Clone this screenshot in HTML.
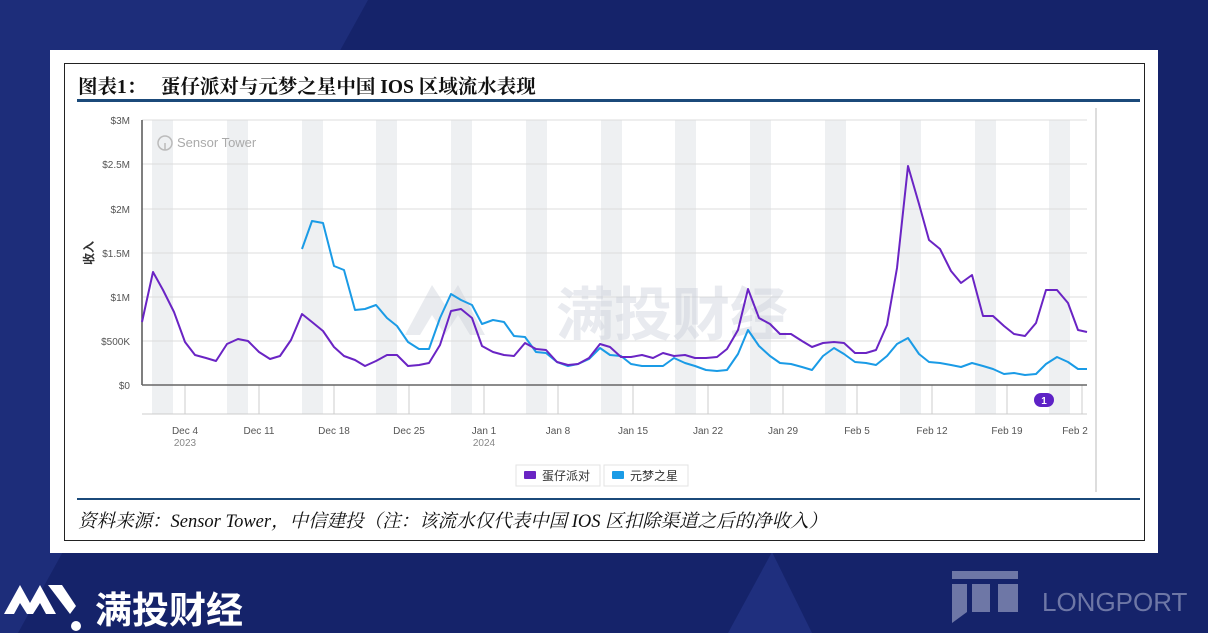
<!DOCTYPE html>
<html><head><meta charset="utf-8"><style>
body{margin:0;width:1208px;height:633px;overflow:hidden;background:#15236a;font-family:"Liberation Sans","Noto Sans CJK SC",sans-serif;position:relative}
.abs{position:absolute}
</style></head><body>
<svg class="abs" style="left:0;top:0" width="1208" height="633">
<polygon points="0,0 368,0 18,633 0,633" fill="#1d2d7a"/>
<polygon points="772,552 728,633 812,633" fill="#1f2f7e"/>
</svg>
<div class="abs" style="left:50px;top:50px;width:1108px;height:503px;background:#fff"></div>
<div class="abs" style="left:64px;top:63px;width:1079px;height:476px;border:1px solid #222;background:#fff"></div>
<div class="abs" style="left:78px;top:71px;font-size:19.5px;font-weight:bold;color:#111;font-family:'Liberation Serif','Noto Serif CJK SC',serif;white-space:nowrap">图表1：&nbsp;&nbsp;&nbsp;蛋仔派对与元梦之星中国 IOS 区域流水表现</div>
<div class="abs" style="left:77px;top:99px;width:1063px;height:3px;background:#1b4a7a"></div>
<div class="abs" style="left:77px;top:498px;width:1063px;height:2px;background:#1b4a7a"></div>
<div class="abs" style="left:78px;top:507px;font-size:18.5px;font-style:italic;color:#111;font-family:'Liberation Serif','Noto Serif CJK SC',serif;white-space:nowrap">资料来源：Sensor Tower，中信建投（注：该流水仅代表中国 IOS 区扣除渠道之后的净收入）</div>
<svg class="abs" style="left:0;top:0" width="1208" height="633" font-family="Liberation Sans, Noto Sans CJK SC, sans-serif">
<g fill="#eef0f2">
<rect x="152" y="120" width="21" height="294"/><rect x="227" y="120" width="21" height="294"/><rect x="302" y="120" width="21" height="294"/><rect x="376" y="120" width="21" height="294"/><rect x="451" y="120" width="21" height="294"/><rect x="526" y="120" width="21" height="294"/><rect x="601" y="120" width="21" height="294"/><rect x="675" y="120" width="21" height="294"/><rect x="750" y="120" width="21" height="294"/><rect x="825" y="120" width="21" height="294"/><rect x="900" y="120" width="21" height="294"/><rect x="975" y="120" width="21" height="294"/><rect x="1049" y="120" width="21" height="294"/>
</g>
<g stroke="#dcdcdc" stroke-width="1">
<line x1="142" y1="120" x2="1087" y2="120"/><line x1="142" y1="164" x2="1087" y2="164"/><line x1="142" y1="209" x2="1087" y2="209"/><line x1="142" y1="253" x2="1087" y2="253"/><line x1="142" y1="297" x2="1087" y2="297"/><line x1="142" y1="341" x2="1087" y2="341"/>
</g>
<line x1="142" y1="120" x2="142" y2="385" stroke="#555" stroke-width="1.5"/>
<line x1="1096" y1="108" x2="1096" y2="492" stroke="#bbb"/>
<line x1="142" y1="414" x2="1087" y2="414" stroke="#ccc"/>
<g stroke="#ccc"><line x1="185" y1="385" x2="185" y2="414"/><line x1="259" y1="385" x2="259" y2="414"/><line x1="334" y1="385" x2="334" y2="414"/><line x1="409" y1="385" x2="409" y2="414"/><line x1="484" y1="385" x2="484" y2="414"/><line x1="558" y1="385" x2="558" y2="414"/><line x1="633" y1="385" x2="633" y2="414"/><line x1="708" y1="385" x2="708" y2="414"/><line x1="783" y1="385" x2="783" y2="414"/><line x1="857" y1="385" x2="857" y2="414"/><line x1="932" y1="385" x2="932" y2="414"/><line x1="1007" y1="385" x2="1007" y2="414"/><line x1="1082" y1="385" x2="1082" y2="414"/></g>
<g font-size="10" fill="#555" text-anchor="end">
<text x="130" y="124">$3M</text><text x="130" y="168">$2.5M</text><text x="130" y="213">$2M</text><text x="130" y="257">$1.5M</text><text x="130" y="301">$1M</text><text x="130" y="345">$500K</text><text x="130" y="389">$0</text>
</g>
<text x="93" y="253" font-size="12" fill="#333" font-weight="bold" transform="rotate(-90 93 253)" text-anchor="middle">收入</text>
<g font-size="10" fill="#555" text-anchor="middle">
<text x="185" y="434">Dec 4</text><text x="185" y="446" fill="#888">2023</text><text x="259" y="434">Dec 11</text><text x="334" y="434">Dec 18</text><text x="409" y="434">Dec 25</text><text x="484" y="434">Jan 1</text><text x="484" y="446" fill="#888">2024</text><text x="558" y="434">Jan 8</text><text x="633" y="434">Jan 15</text><text x="708" y="434">Jan 22</text><text x="783" y="434">Jan 29</text><text x="857" y="434">Feb 5</text><text x="932" y="434">Feb 12</text><text x="1007" y="434">Feb 19</text><text x="1075" y="434">Feb 2</text>
</g>
<g opacity="0.4">
<path d="M405,335 L432,285 L445,305 L458,285 L485,335 L470,335 L458,315 L445,335 L432,315 L420,335Z" fill="#c8ccd8"/>
<text x="556" y="335" font-size="58" font-weight="bold" fill="#c8ccd8">满投财经</text>
</g>
<circle cx="165" cy="143" r="7" fill="none" stroke="#bbb" stroke-width="1.5"/><line x1="165" y1="143" x2="165" y2="150" stroke="#bbb" stroke-width="1.5"/>
<text x="177" y="147" font-size="13" fill="#aaa">Sensor Tower</text>
<line x1="142" y1="385" x2="1087" y2="385" stroke="#666" stroke-width="1.5"/>
<polyline fill="none" stroke="#1a9be6" stroke-width="2" stroke-linejoin="round" points="302,249 312,221 323,223 334,266 344,270 355,310 365,309 376,305 387,318 397,326 408,342 419,349 429,349 440,318 451,294 461,300 472,305 482,324 493,320 504,322 514,336 525,337 536,352 546,353 557,362 568,366 578,364 589,359 600,348 610,355 621,356 631,364 642,366 653,366 663,366 674,358 685,363 695,366 706,370 717,371 727,370 738,354 748,330 759,346 770,356 780,363 791,364 802,367 812,370 823,356 834,348 844,354 855,362 866,363 876,365 887,356 897,344 908,338 919,354 929,362 940,363 951,365 961,367 972,363 983,366 993,369 1004,374 1014,373 1025,375 1036,374 1046,364 1057,357 1068,362 1078,369 1087,369"/>
<polyline fill="none" stroke="#6a24c4" stroke-width="2" stroke-linejoin="round" points="142,322 153,272 163,290 174,312 185,342 195,355 206,358 216,361 227,344 238,339 248,341 259,352 270,359 280,356 291,340 302,314 312,322 323,331 334,347 344,356 355,360 365,366 376,361 387,355 397,355 408,366 419,365 429,363 440,345 451,311 461,309 472,318 482,346 493,352 504,355 514,356 525,343 536,349 546,350 557,362 568,365 578,364 589,358 600,344 610,347 621,357 631,357 642,355 653,358 663,353 674,356 685,355 695,358 706,358 717,357 727,349 738,330 748,289 759,318 770,324 780,334 791,334 802,341 812,347 823,343 834,342 844,343 855,353 866,353 876,350 887,325 897,268 908,166 919,204 929,240 940,249 951,271 961,283 972,275 983,316 993,316 1004,326 1014,334 1025,336 1036,323 1046,290 1057,290 1068,303 1078,330 1087,332"/>
<rect x="1034" y="393" width="20" height="14" rx="7" fill="#5e22c6"/><text x="1044" y="404" font-size="10" fill="#fff" font-weight="bold" text-anchor="middle">1</text>
<rect x="516" y="465" width="84" height="21" fill="#fff" stroke="#e3e3e3"/><rect x="524" y="471" width="12" height="8" rx="1" fill="#6a24c4"/><text x="542" y="480" font-size="12" fill="#333">蛋仔派对</text>
<rect x="604" y="465" width="84" height="21" fill="#fff" stroke="#e3e3e3"/><rect x="612" y="471" width="12" height="8" rx="1" fill="#1a9be6"/><text x="630" y="480" font-size="12" fill="#333">元梦之星</text>
<path d="M4,614 L20,585 L30,603 L40,585 L56,614 L46,614 L40,603 L33,614 L27,614 L20,603 L14,614Z" fill="#fff"/>
<path d="M48,585 L62,585 L76,606 L70,614 Z" fill="#fff"/><circle cx="76" cy="626" r="5" fill="#fff"/>
<text x="95" y="623" font-size="37" fill="#fff" font-weight="bold">满投财经</text>
<g fill="#6e77a6"><rect x="952" y="571" width="66" height="8"/><rect x="952" y="584" width="15" height="28"/><polygon points="952,612 967,612 952,623"/><rect x="972" y="584" width="18" height="28"/><rect x="998" y="584" width="20" height="28"/></g>
<text x="1042" y="611" font-size="26" fill="#6e77a6">LONGPORT</text>
</svg>
</body></html>
